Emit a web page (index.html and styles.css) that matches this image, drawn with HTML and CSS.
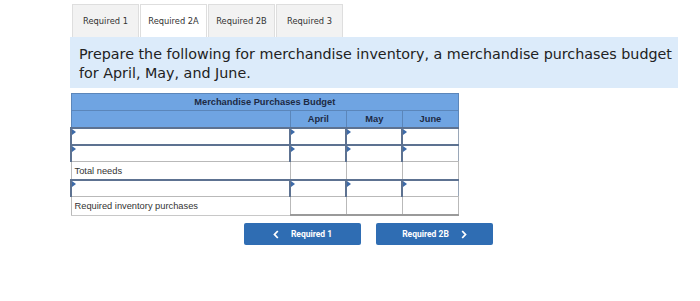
FILE: index.html
```html
<!DOCTYPE html>
<html lang="en">
<head>
    <meta charset="UTF-8">
    <title>Merchandise Purchases Budget</title>
    <link rel="stylesheet" href="styles.css">
</head>
<body>
    <div class="wrap">
        <div class="tabs">
            <div class="tab">Required 1</div>
            <div class="tab active">Required 2A</div>
            <div class="tab">Required 2B</div>
            <div class="tab">Required 3</div>
        </div>

        <div class="prompt">
            Prepare the following for merchandise inventory, a merchandise purchases budget for April, May, and June.
        </div>

        <table class="budget">
            <colgroup>
                <col class="c-label">
                <col class="c-month">
                <col class="c-month">
                <col class="c-month">
            </colgroup>
            <tr class="head">
                <th colspan="4">Merchandise Purchases Budget</th>
            </tr>
            <tr class="head">
                <th></th>
                <th>April</th>
                <th>May</th>
                <th>June</th>
            </tr>
            <tr>
                <td class="entry"></td>
                <td class="entry"></td>
                <td class="entry"></td>
                <td class="entry"></td>
            </tr>
            <tr>
                <td class="entry"></td>
                <td class="entry"></td>
                <td class="entry"></td>
                <td class="entry"></td>
            </tr>
            <tr class="plain">
                <td>Total needs</td>
                <td></td>
                <td></td>
                <td></td>
            </tr>
            <tr>
                <td class="entry"></td>
                <td class="entry"></td>
                <td class="entry"></td>
                <td class="entry"></td>
            </tr>
            <tr class="plain last">
                <td class="label">Required inventory purchases</td>
                <td></td>
                <td></td>
                <td></td>
            </tr>
        </table>

        <div class="nav">
            <button class="nav-btn">
                <svg class="chev" width="6" height="9" viewBox="0 0 6 9"><path d="M4.8 1 L1.5 4.5 L4.8 8" fill="none" stroke="#fff" stroke-width="1.8"/></svg>
                Required 1
            </button>
            <button class="nav-btn">
                Required 2B
                <svg class="chev right" width="6" height="9" viewBox="0 0 6 9"><path d="M1.2 1 L4.5 4.5 L1.2 8" fill="none" stroke="#fff" stroke-width="1.8"/></svg>
            </button>
        </div>
    </div>
</body>
</html>
```

FILE: styles.css
```css
body {
    margin: 0;
    background: #fff;
    font-family: "DejaVu Sans", Verdana, sans-serif;
    color: #333;
}
.wrap {
    margin-left: 70px;
    width: 608px;
    padding-top: 4px;
}
.tabs {
    display: flex;
    padding-left: 2px;
    gap: 1px;
}
.tab {
    box-sizing: border-box;
    width: 67px;
    height: 33px;
    line-height: 33px;
    text-align: center;
    font-size: 8.3px;
    color: #333;
    background: #f2f2f2;
    border: 1px solid #dedede;
    border-bottom: none;
}
.tab.active {
    background: #fff;
}
.prompt {
    background: #dcebfa;
    padding: 8px 2px 5px 9px;
    font-size: 14.3px;
    line-height: 19px;
    color: #222;
}
.budget {
    margin-top: 5px;
    width: 389px;
    border-collapse: collapse;
    font-family: "Liberation Sans", Arial, sans-serif;
    font-size: 9.3px;
    table-layout: fixed;
}
.c-label {
    width: 219px;
}
.c-month {
    width: 56px;
}
.budget th,
.budget td {
    height: 16px;
    padding: 0 3px;
    border: 1px solid #b9b9b9;
    text-align: left;
    white-space: nowrap;
}
.budget tr.plain td {
    height: 17px;
}
.budget .head th {
    background: #6fa4e2;
    color: #1d2a44;
    font-weight: bold;
    border-color: #5b86ba;
    text-align: center;
}
.budget td.entry {
    position: relative;
    height: 15px;
    border-top: 2px solid #5d7291;
    border-left: 2px solid #5d7291;
    border-right: 1px solid #9aa7b8;
}
.budget td.entry::before {
    content: "";
    position: absolute;
    top: 0;
    left: 0;
    border-top: 3px solid transparent;
    border-bottom: 3px solid transparent;
    border-left: 4px solid #3d6aa8;
}
.budget tr.last td {
    border-bottom: 2px solid #9a9a9a;
}
.budget tr.last td.label {
    border-bottom: 1px solid #c8c8c8;
}
.nav {
    display: flex;
    gap: 15px;
    margin-top: 7px;
    padding-left: 174px;
}
.nav-btn {
    display: flex;
    align-items: center;
    justify-content: center;
    width: 117px;
    height: 22px;
    border: none;
    border-radius: 2px;
    background: #2f6db3;
    color: #fff;
    font-family: Roboto, "Liberation Sans", sans-serif;
    font-weight: bold;
    font-size: 8.5px;
    cursor: pointer;
}
.chev {
    margin-right: 12px;
}
.chev.right {
    margin-right: 0;
    margin-left: 12px;
}
```
